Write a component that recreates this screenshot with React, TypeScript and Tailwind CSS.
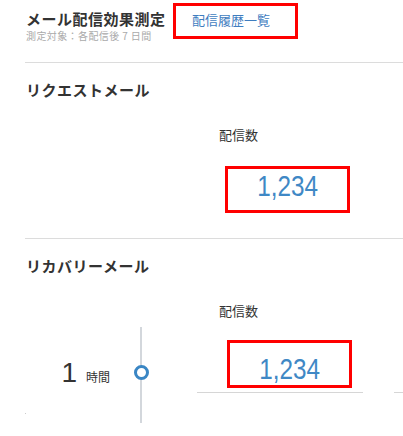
import React from "react";

const jp = "font-['Noto_Sans_CJK_JP','Noto_Sans',sans-serif]";
const num = "font-['Liberation_Sans',Arial,sans-serif]";

function Count({ value, className }: { value: string; className: string }) {
  return (
    <div className={`border-[3px] border-[#ff0000] text-center ${className}`}>
      <span className={`${num} inline-block scale-x-[0.81] text-[30px] leading-[30px] text-[#3f88c5]`}>{value}</span>
    </div>
  );
}

export default function App() {
  return (
    <div className={`${jp} w-[403px] h-[436px] overflow-hidden bg-white text-[#333]`}>
      <header className="flex items-start pl-[26px] h-[62px]">
        <div className="w-[147px] pt-[9px]">
          <h1 className="text-[15px] font-bold leading-[20px] tracking-[0.5px]">メール配信効果測定</h1>
          <p className="text-[10px] leading-[14px] tracking-[0.4px] text-[#aaa]">測定対象：各配信後 7 日間</p>
        </div>
        <a className="mt-[3px] w-[125px] h-[36px] border-[3px] border-[#ff0000] pl-[16px] pt-[5px] text-[13px] leading-[18px] text-[#3f7dbf]">
          配信履歴一覧
        </a>
      </header>
      <div className="ml-[25px] h-px bg-[#dcdcdc]" />

      <section className="h-[175px] pt-[17px]">
        <h2 className="pl-[26px] text-[15px] font-bold leading-[20px] tracking-[0.5px]">リクエストメール</h2>
        <p className="pl-[219px] mt-[26px] text-[13px] leading-[18px]">配信数</p>
        <Count value="1,234" className="ml-[225px] mt-[22px] w-[125px] h-[47px] pt-[2px]" />
      </section>
      <div className="ml-[25px] h-px bg-[#dcdcdc]" />

      <section className="pt-[17px]">
        <h2 className="pl-[26px] text-[15px] font-bold leading-[20px] tracking-[0.5px]">リカバリーメール</h2>
        <p className="pl-[219px] mt-[26px] text-[13px] leading-[18px]">配信数</p>
        <div className="flex mt-[7px] h-[96px]">
          <div className="w-[133px] flex justify-end items-baseline pr-[23px] pt-[32px]">
            <span className={`${num} text-[28px] leading-[28px] text-[#333]`}>1</span>
            <span className="ml-[9px] text-[12px] leading-[16px]">時間</span>
          </div>
          <div className="relative w-[16px]">
            <div className="mx-auto w-[2px] h-full bg-[#d3d7dc]" />
            <div className="absolute left-[0.5px] top-[38px] w-[15px] h-[15px] rounded-full border-[3px] border-[#3a86c4] bg-white" />
          </div>
          <div className="ml-[48px] w-[166px] h-[66px] border-b border-[#d6d6d6]">
            <Count value="1,234" className="ml-[30px] mt-[13px] w-[125px] h-[48px] pt-[11px]" />
          </div>
          <div className="ml-[31px] flex-1 h-[66px] border-b border-[#d6d6d6]" />
        </div>
      </section>
      <div className="ml-[25px] -mt-[10px] w-px h-px bg-[#ccc]" />
    </div>
  );
}
